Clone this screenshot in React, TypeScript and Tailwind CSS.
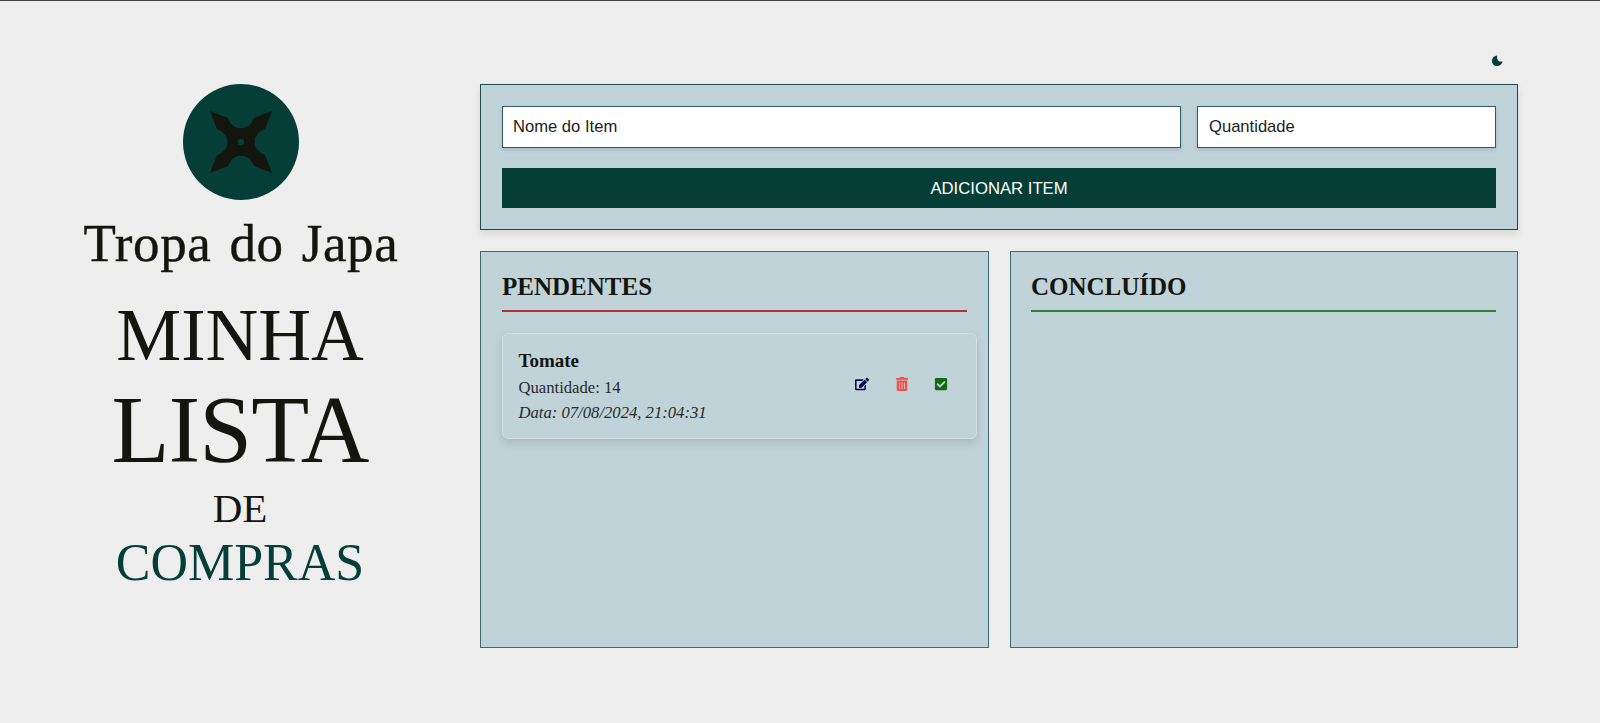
import { FaCheckSquare, FaEdit, FaTrashAlt } from "react-icons/fa";

function Logo() {
  return (
    <svg viewBox="0 0 116 116" className="ml-px h-[116px] w-[116px] shrink-0">
      <circle cx="58" cy="58" r="58" fill="#053d37" />
      <g transform="translate(58 58)" fill="#15150f">
        {[0, 90, 180, 270].map((angle) => (
          <path
            key={angle}
            transform={`rotate(${angle})`}
            d="M1 1L-13.500 1Q-13 -9 -24 -13L-31 -31L-13 -24Q-9 -13 1 -13.500Z"
          />
        ))}
        <circle r="3.200" fill="#053d37" />
      </g>
    </svg>
  );
}

function Moon() {
  return (
    <svg viewBox="0 0 12 12" className="h-3 w-3">
      <path d="M6.200 .5A5.300 5.300 0 1 0 11.500 6.300Q8.500 7.200 7 5.400Q5.400 3.200 6.200 .5Z" fill="#053d37" />
    </svg>
  );
}

function Sidebar() {
  return (
    <aside className="flex w-[480px] shrink-0 flex-col items-center pt-[83px] text-[#15150f]">
      <Logo />
      <p className="ml-[2px] mt-[13px] whitespace-nowrap text-[53px] leading-[60px] tracking-[0.650px] [-webkit-text-stroke:0.4px_#15150f] [word-spacing:4px]">
        Tropa do Japa
      </p>
      <h1 className="mt-[23px] flex flex-col items-center whitespace-nowrap">
        <span className="text-[73px] leading-[80px]">MINHA</span>
        <span className="text-[95px] leading-[108px] tracking-[-0.900px]">LISTA</span>
        <span className="text-[41px] leading-[48px]">DE</span>
        <span className="text-[52px] leading-[62px] text-[#053d37]">COMPRAS</span>
      </h1>
    </aside>
  );
}

const field =
  "h-[42px] min-w-0 border border-[#315e5b] bg-white px-[10px] pb-px font-['Liberation_Sans',sans-serif] text-[16.600px] text-[#111] shadow-[0_2px_4px_rgba(0,0,0,0.12)] outline-none placeholder:text-[#1c1c1c] placeholder:opacity-100";

function ItemForm() {
  return (
    <form className="flex h-[146px] flex-col border border-[#1d4d49] bg-[#c0d3d9] px-[21px] pt-[21px] shadow-[0_4px_8px_rgba(0,0,0,0.1)]">
      <div className="flex gap-4">
        <input className={`${field} w-[679px]`} placeholder="Nome do Item" />
        <input className={`${field} flex-1 pl-[11px]`} placeholder="Quantidade" />
      </div>
      <button
        type="button"
        className="mt-5 h-10 bg-[#053d37] pt-px font-['Liberation_Sans',sans-serif] text-[16.700px] text-white"
      >
        ADICIONAR ITEM
      </button>
    </form>
  );
}

function PendingItem() {
  return (
    <li className="mt-[21px] flex h-[106px] w-[475px] items-center justify-between rounded-md border border-[#d2dfe3] pl-[15.500px] pr-[28px] shadow-[0_4px_8px_rgba(0,0,0,0.12)]">
      <div className="pb-px text-[16.650px] leading-[25px] text-[#262b2a]">
        <h3 className="text-[19px] font-bold leading-[29px] text-[#15150f]">Tomate</h3>
        <p>Quantidade: 14</p>
        <p className="italic">Data: 07/08/2024, 21:04:31</p>
      </div>
      <div className="flex items-center gap-[25.400px] pb-[5px] text-[14px]">
        <FaEdit className="text-[#08084f]" />
        <FaTrashAlt className="text-[#ee5148]" />
        <FaCheckSquare className="text-[#15690f]" />
      </div>
    </li>
  );
}

export default function App() {
  return (
    <div className="flex h-[723px] w-[1600px] overflow-hidden border-t border-[#3f3f3f] bg-[#eeeeee] font-['Liberation_Serif',serif]">
      <Sidebar />
      <main className="flex w-[1038px] flex-col">
        <div className="flex h-[83px] justify-end pr-[15px] pt-[54px]">
          <Moon />
        </div>
        <ItemForm />
        <div className="mt-[21px] flex gap-[21px]">
          <section className="h-[397px] w-[509px] border border-[#3f6c6a] bg-[#c0d3d9] px-[21px] pt-[18px]">
            <h2 className="h-[42px] border-b-2 border-[#b5302f] text-[25px] font-bold leading-[34px] text-[#15150f]">
              PENDENTES
            </h2>
            <ul>
              <PendingItem />
            </ul>
          </section>
          <section className="h-[397px] w-[508px] border border-[#3f6c6a] bg-[#c0d3d9] pl-[20px] pr-[21px] pt-[18px]">
            <h2 className="h-[42px] border-b-2 border-[#2f7f2c] text-[25px] font-bold leading-[34px] text-[#15150f]">
              CONCLUÍDO
            </h2>
          </section>
        </div>
      </main>
    </div>
  );
}
